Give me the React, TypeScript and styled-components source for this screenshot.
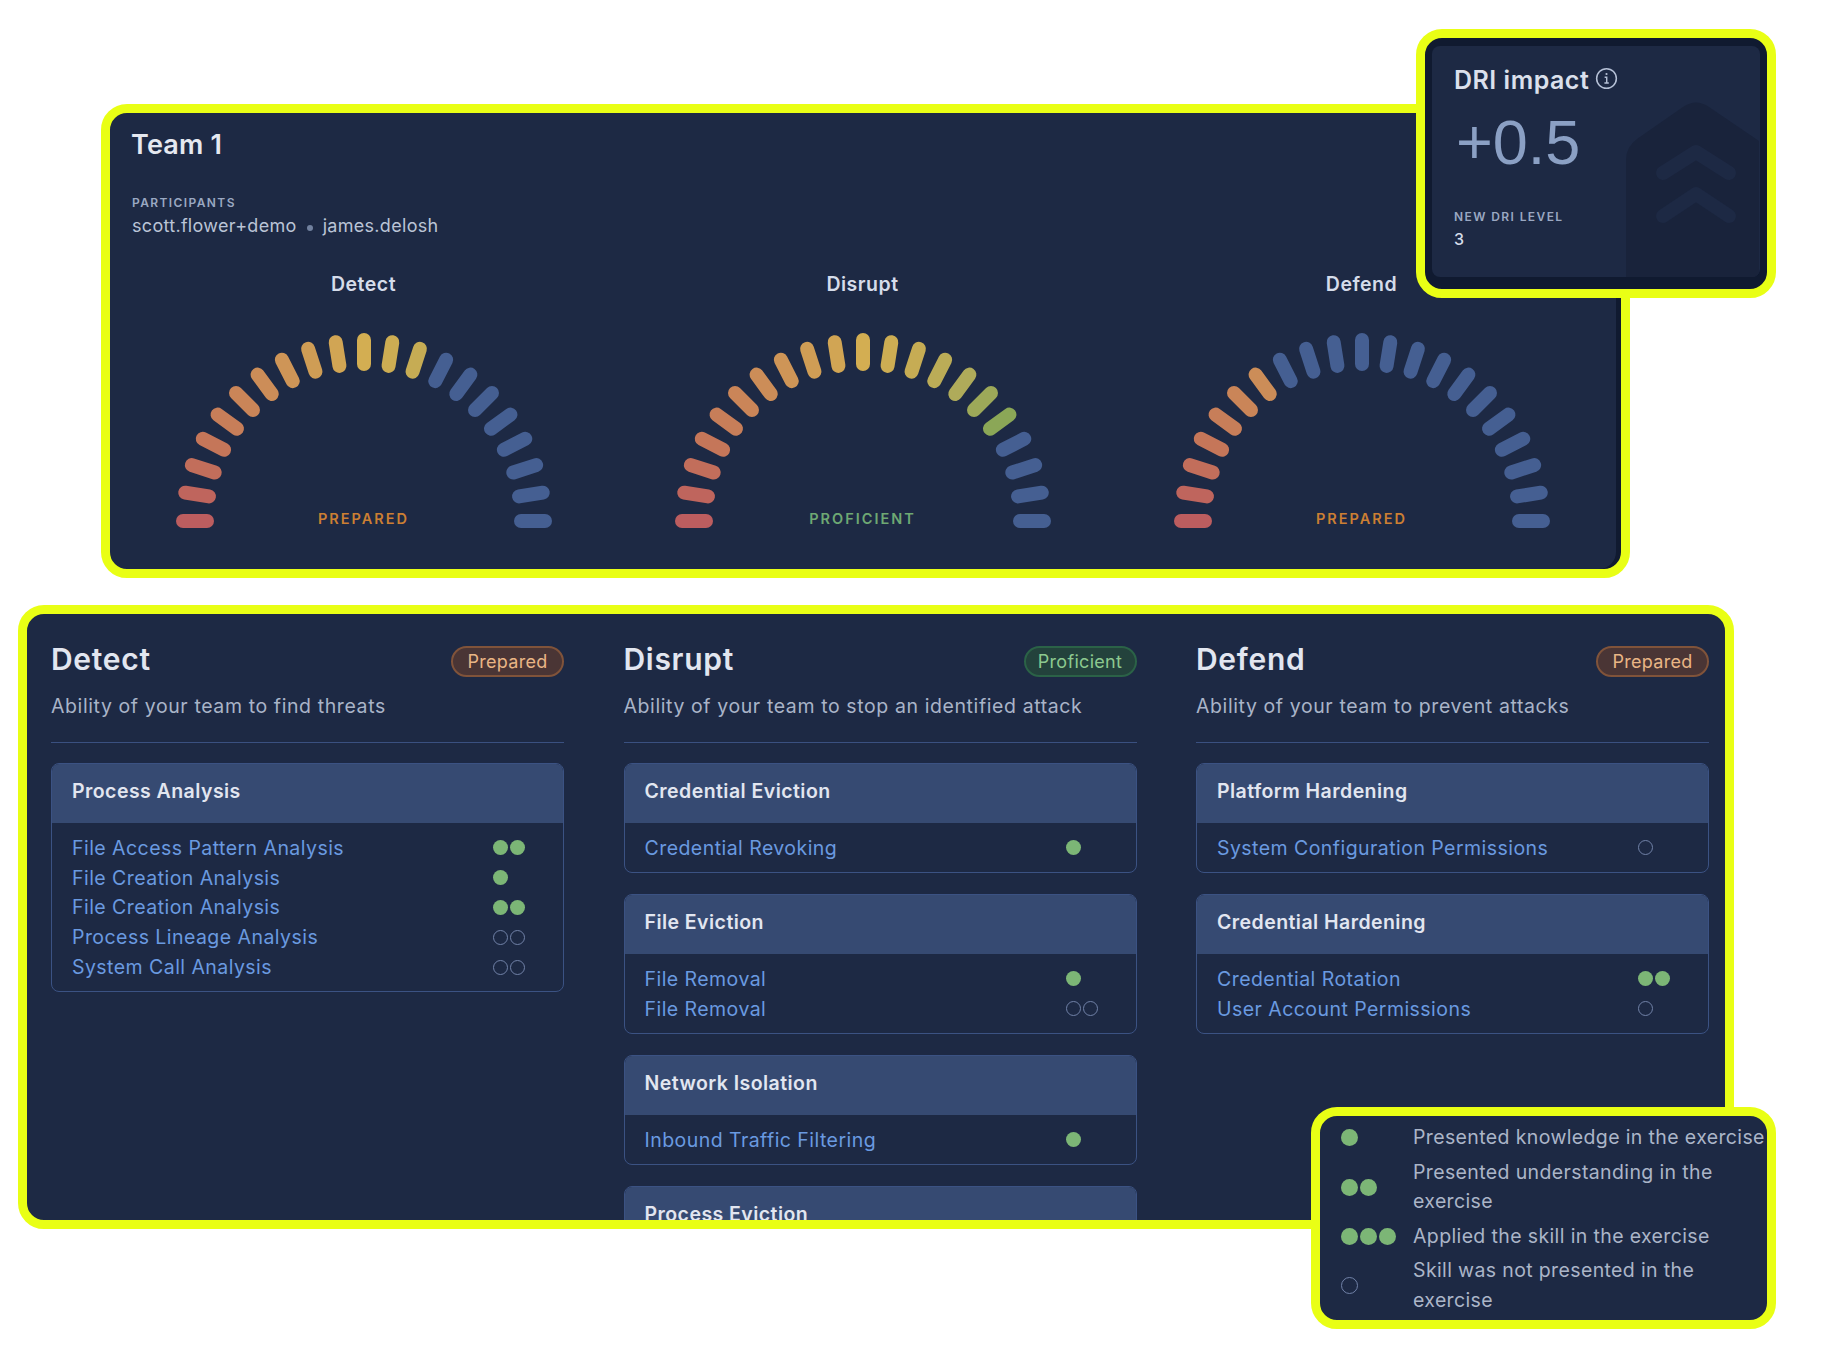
import styled, { createGlobalStyle } from "styled-components";

const GlobalStyle = createGlobalStyle`
  * {
    box-sizing: border-box;
  }
  body {
    margin: 0;
    background: #fff;
    font-family: "Inter", "Open Sans", sans-serif;
  }
`;

const YELLOW = "#e9ff15";
const NAVY = "#1d2944";
const SKILL_BLUE = "#6a9ae0";

const Page = styled.div`
  position: relative;
  width: 1822px;
  height: 1366px;
  padding-top: 104px;
  overflow: hidden;
  background: #fff;
`;

const TeamPanel = styled.section`
  width: 1529px;
  height: 474px;
  margin-left: 101px;
  background: ${NAVY};
  border: 9px solid ${YELLOW};
  border-radius: 26px;
  box-shadow: inset -5px 0 0 #101a30;
`;

const TeamHead = styled.div`
  padding: 16px 22px 0;
`;

const TeamName = styled.h1`
  margin: 0 0 0 -1px;
  font-size: 27px;
  line-height: 32px;
  font-weight: 600;
  letter-spacing: 0.2px;
  color: #e5e8f0;
`;

const SmallCaps = styled.div`
  font-size: 12px;
  line-height: 16px;
  font-weight: 600;
  letter-spacing: 1.4px;
  color: #9aa8c2;
  text-transform: uppercase;
`;

const ParticipantsLabel = styled(SmallCaps)`
  margin-top: 34px;
`;

const Participants = styled.div`
  display: flex;
  align-items: center;
  gap: 10px;
  margin-top: 2px;
  font-size: 18px;
  line-height: 26px;
  letter-spacing: 0.3px;
  color: #bac4d6;
`;

const Separator = styled.span`
  width: 6px;
  height: 6px;
  margin-top: 3px;
  border-radius: 50%;
  background: #71819f;
`;

const GaugeRow = styled.div`
  display: grid;
  grid-template-columns: repeat(3, 499px);
  padding-left: 4px;
  margin-top: 31px;
`;

const GaugeColumn = styled.div`
  display: flex;
  flex-direction: column;
  align-items: center;
`;

const GaugeTitle = styled.div`
  font-size: 19.5px;
  line-height: 28px;
  font-weight: 600;
  letter-spacing: 0.5px;
  color: #d5dcea;
`;

const GaugeBox = styled.div`
  position: relative;
  width: 378px;
  height: 196px;
  margin-top: 35px;
`;

const GaugeLabel = styled.div<{ $color: string }>`
  position: absolute;
  left: 0;
  right: 0;
  top: 176px;
  text-align: center;
  font-size: 14.5px;
  line-height: 20px;
  font-weight: 600;
  letter-spacing: 2px;
  color: ${(p) => p.$color};
`;

const ImpactPanel = styled.aside`
  position: absolute;
  left: 1416px;
  top: 29px;
  width: 360px;
  height: 269px;
  padding: 8px 7px 12px;
  background: #101a30;
  border: 9px solid ${YELLOW};
  border-radius: 26px;
`;

const ImpactCard = styled.div`
  position: relative;
  height: 100%;
  padding: 17px 22px 0;
  overflow: hidden;
  background: ${NAVY};
  border-radius: 8px;
`;

const ImpactArt = styled.svg`
  position: absolute;
  inset: 0;
  width: 100%;
  height: 100%;
`;

const ImpactContent = styled.div`
  position: relative;
`;

const ImpactTitle = styled.div`
  display: flex;
  align-items: center;
  gap: 6px;
  font-size: 25px;
  line-height: 34px;
  font-weight: 600;
  letter-spacing: 0.5px;
  color: #dbe0ec;

  svg {
    margin-top: -3px;
  }
`;

const ImpactValue = styled.div`
  margin: 10px 0 0 2px;
  font-family: "Liberation Sans", "Roboto", sans-serif;
  font-size: 63px;
  line-height: 70px;
  font-weight: 400;
  color: #8ba0c4;
`;

const LevelLabel = styled(SmallCaps)`
  margin-top: 32px;
`;

const LevelValue = styled.div`
  margin-top: 2px;
  font-size: 16px;
  line-height: 24px;
  font-weight: 500;
  color: #d5dcea;
`;

const SkillsPanel = styled.section`
  display: grid;
  grid-template-columns: repeat(3, 513px);
  column-gap: 59.5px;
  width: 1716px;
  height: 624px;
  margin: 27px 0 0 18px;
  padding: 23px 16px 0 24px;
  overflow: hidden;
  background: ${NAVY};
  border: 9px solid ${YELLOW};
  border-radius: 26px;
`;

const SkillColumn = styled.div`
  display: flex;
  flex-direction: column;
`;

const ColumnHead = styled.div`
  display: flex;
  align-items: center;
  justify-content: space-between;
`;

const ColumnTitle = styled.h2`
  margin: 0;
  font-size: 30px;
  line-height: 44px;
  font-weight: 600;
  letter-spacing: 0.7px;
  color: #e2e6f0;
`;

const Badge = styled.span<{ $tone: "prepared" | "proficient" }>`
  display: flex;
  align-items: center;
  justify-content: center;
  width: 113px;
  height: 31px;
  margin-top: 4px;
  border-radius: 16px;
  font-size: 18px;
  letter-spacing: 0.3px;
  border: 2px solid ${(p) => (p.$tone === "prepared" ? "#80533a" : "#2b6247")};
  background: ${(p) => (p.$tone === "prepared" ? "#4a3535" : "#23423c")};
  color: ${(p) => (p.$tone === "prepared" ? "#e9b585" : "#8cc98f")};
`;

const ColumnDescription = styled.p`
  margin: 11px 0 0;
  padding-bottom: 22px;
  border-bottom: 1px solid #3a5080;
  font-size: 19.5px;
  line-height: 28px;
  letter-spacing: 0.6px;
  color: #a9b4c8;
`;

const CardStack = styled.div`
  display: flex;
  flex-direction: column;
  gap: 21px;
  margin-top: 20px;
`;

const SkillCard = styled.div`
  border: 1px solid #3b5283;
  border-radius: 8px;
  overflow: hidden;
`;

const CardHeader = styled.div`
  height: 59px;
  padding: 12px 20px 0;
  background: #364a72;
  font-size: 19.5px;
  line-height: 30px;
  font-weight: 600;
  letter-spacing: 0.45px;
  color: #e2e6f0;
`;

const CardBody = styled.div`
  padding: 10px 19px 9.2px 20px;
`;

const SkillRow = styled.div`
  display: flex;
  align-items: center;
  justify-content: space-between;
  height: 29.8px;
  font-size: 19.5px;
  letter-spacing: 0.45px;
  color: ${SKILL_BLUE};
`;

const DotSet = styled.div<{ $width: number }>`
  display: flex;
  gap: 2px;
  width: ${(p) => p.$width}px;
  flex: none;
`;

const Dot = styled.span<{ $filled: boolean; $size: number }>`
  width: ${(p) => p.$size}px;
  height: ${(p) => p.$size}px;
  border-radius: 50%;
  background: ${(p) => (p.$filled ? "#7cb676" : "transparent")};
  border: ${(p) => (p.$filled ? "none" : "1.5px solid #7182a8")};
`;

const LegendPanel = styled.aside`
  position: absolute;
  left: 1311px;
  top: 1107px;
  display: flex;
  flex-direction: column;
  gap: 5px;
  width: 465px;
  height: 222px;
  padding: 7px 0 0 21px;
  background: ${NAVY};
  border: 9px solid ${YELLOW};
  border-radius: 26px;
`;

const LegendRow = styled.div`
  display: flex;
  align-items: center;
`;

const LegendText = styled.div`
  width: 354px;
  font-size: 19.5px;
  line-height: 29.5px;
  letter-spacing: 0.37px;
  color: #abb5c8;
`;

// bar colours from the far left of the arc up to where the score ends
const GAUGE_STOPS: [number, number[]][] = [
  [0, [188, 93, 95]],
  [3, [197, 118, 89]],
  [6, [204, 141, 88]],
  [9, [209, 165, 84]],
  [10, [211, 174, 82]],
  [12, [198, 172, 84]],
  [14, [175, 171, 90]],
  [16, [139, 167, 87]],
  [20, [139, 167, 87]],
];

function barColor(index: number): string {
  for (let i = 1; i < GAUGE_STOPS.length; i++) {
    const [endAt, end] = GAUGE_STOPS[i];
    const [startAt, start] = GAUGE_STOPS[i - 1];
    if (index <= endAt) {
      const t = (index - startAt) / (endAt - startAt);
      const mixed = start.map((c, k) => Math.round(c + (end[k] - c) * t));
      return `rgb(${mixed.join(",")})`;
    }
  }
  return "#455f92";
}

function Gauge({ filled }: { filled: number }) {
  const bars = Array.from({ length: 21 }, (_, i) => {
    const angle = Math.PI - (i * Math.PI) / 20;
    return {
      x1: 189 + 157 * Math.cos(angle),
      y1: 188 - 157 * Math.sin(angle),
      x2: 189 + 181 * Math.cos(angle),
      y2: 188 - 181 * Math.sin(angle),
      color: i < filled ? barColor(i) : "#455f92",
    };
  });

  return (
    <svg width="378" height="196" viewBox="0 0 378 196">
      {bars.map((b, i) => (
        <line
          key={i}
          x1={b.x1}
          y1={b.y1}
          x2={b.x2}
          y2={b.y2}
          stroke={b.color}
          strokeWidth="14"
          strokeLinecap="round"
        />
      ))}
    </svg>
  );
}

function InfoIcon() {
  return (
    <svg width="23" height="23" viewBox="0 0 21 21" fill="none" stroke="#b5c0d6">
      <circle cx="10.5" cy="10.5" r="9" strokeWidth="1.4" />
      <circle cx="10.5" cy="6.4" r="1" fill="#b5c0d6" stroke="none" />
      <path d="M8.8 9.3h1.9v5.2M8.6 14.6h4" strokeWidth="1.3" />
    </svg>
  );
}

type Skill = { name: string; level: number; slots?: number };
type Group = { title: string; skills: Skill[] };
type Area = {
  title: string;
  tone: "prepared" | "proficient";
  description: string;
  groups: Group[];
};

const AREAS: Area[] = [
  {
    title: "Detect",
    tone: "prepared",
    description: "Ability of your team to find threats",
    groups: [
      {
        title: "Process Analysis",
        skills: [
          { name: "File Access Pattern Analysis", level: 2 },
          { name: "File Creation Analysis", level: 1 },
          { name: "File Creation Analysis", level: 2 },
          { name: "Process Lineage Analysis", level: 0, slots: 2 },
          { name: "System Call Analysis", level: 0, slots: 2 },
        ],
      },
    ],
  },
  {
    title: "Disrupt",
    tone: "proficient",
    description: "Ability of your team to stop an identified attack",
    groups: [
      {
        title: "Credential Eviction",
        skills: [{ name: "Credential Revoking", level: 1 }],
      },
      {
        title: "File Eviction",
        skills: [
          { name: "File Removal", level: 1 },
          { name: "File Removal", level: 0, slots: 2 },
        ],
      },
      {
        title: "Network Isolation",
        skills: [{ name: "Inbound Traffic Filtering", level: 1 }],
      },
      { title: "Process Eviction", skills: [] },
    ],
  },
  {
    title: "Defend",
    tone: "prepared",
    description: "Ability of your team to prevent attacks",
    groups: [
      {
        title: "Platform Hardening",
        skills: [{ name: "System Configuration Permissions", level: 0, slots: 1 }],
      },
      {
        title: "Credential Hardening",
        skills: [
          { name: "Credential Rotation", level: 2 },
          { name: "User Account Permissions", level: 0, slots: 1 },
        ],
      },
    ],
  },
];

const GAUGES = [
  { title: "Detect", filled: 13, label: "PREPARED", color: "#cc7f33" },
  { title: "Disrupt", filled: 17, label: "PROFICIENT", color: "#6ea873" },
  { title: "Defend", filled: 7, label: "PREPARED", color: "#cc7f33" },
];

const LEGEND = [
  { level: 1, text: "Presented knowledge in the exercise" },
  { level: 2, text: "Presented understanding in the exercise" },
  { level: 3, text: "Applied the skill in the exercise" },
  { level: 0, text: "Skill was not presented in the exercise" },
];

function Dots({ skill }: { skill: Skill }) {
  const count = skill.level || skill.slots || 1;
  return (
    <DotSet $width={51}>
      {Array.from({ length: count }, (_, i) => (
        <Dot key={i} $filled={skill.level > 0} $size={15} />
      ))}
    </DotSet>
  );
}

export default function App() {
  return (
    <Page>
      <GlobalStyle />

      <TeamPanel>
        <TeamHead>
          <TeamName>Team 1</TeamName>
          <ParticipantsLabel>Participants</ParticipantsLabel>
          <Participants>
            <span>scott.flower+demo</span>
            <Separator />
            <span>james.delosh</span>
          </Participants>
        </TeamHead>
        <GaugeRow>
          {GAUGES.map((g) => (
            <GaugeColumn key={g.title}>
              <GaugeTitle>{g.title}</GaugeTitle>
              <GaugeBox>
                <Gauge filled={g.filled} />
                <GaugeLabel $color={g.color}>{g.label}</GaugeLabel>
              </GaugeBox>
            </GaugeColumn>
          ))}
        </GaugeRow>
      </TeamPanel>

      <SkillsPanel>
        {AREAS.map((area) => (
          <SkillColumn key={area.title}>
            <ColumnHead>
              <ColumnTitle>{area.title}</ColumnTitle>
              <Badge $tone={area.tone}>
                {area.tone === "prepared" ? "Prepared" : "Proficient"}
              </Badge>
            </ColumnHead>
            <ColumnDescription>{area.description}</ColumnDescription>
            <CardStack>
              {area.groups.map((group) => (
                <SkillCard key={group.title}>
                  <CardHeader>{group.title}</CardHeader>
                  <CardBody>
                    {group.skills.map((skill, i) => (
                      <SkillRow key={i}>
                        <span>{skill.name}</span>
                        <Dots skill={skill} />
                      </SkillRow>
                    ))}
                  </CardBody>
                </SkillCard>
              ))}
            </CardStack>
          </SkillColumn>
        ))}
      </SkillsPanel>

      <ImpactPanel>
        <ImpactCard>
          <ImpactArt viewBox="0 0 326 231" fill="none">
            <path
              d="M193 231V114Q193 101 204 93L250 61Q263 52 276 61L326 95V231Z"
              fill="#19233b"
            />
            <path
              d="M230 127L263 106L296 127M230 170L263 148L296 170"
              stroke={NAVY}
              strokeWidth="14"
              strokeLinecap="round"
              strokeLinejoin="round"
            />
          </ImpactArt>
          <ImpactContent>
            <ImpactTitle>
              DRI impact
              <InfoIcon />
            </ImpactTitle>
            <ImpactValue>+0.5</ImpactValue>
            <LevelLabel>New DRI level</LevelLabel>
            <LevelValue>3</LevelValue>
          </ImpactContent>
        </ImpactCard>
      </ImpactPanel>

      <LegendPanel>
        {LEGEND.map((row) => (
          <LegendRow key={row.text}>
            <DotSet $width={72}>
              {Array.from({ length: row.level || 1 }, (_, i) => (
                <Dot key={i} $filled={row.level > 0} $size={17} />
              ))}
            </DotSet>
            <LegendText>{row.text}</LegendText>
          </LegendRow>
        ))}
      </LegendPanel>
    </Page>
  );
}
